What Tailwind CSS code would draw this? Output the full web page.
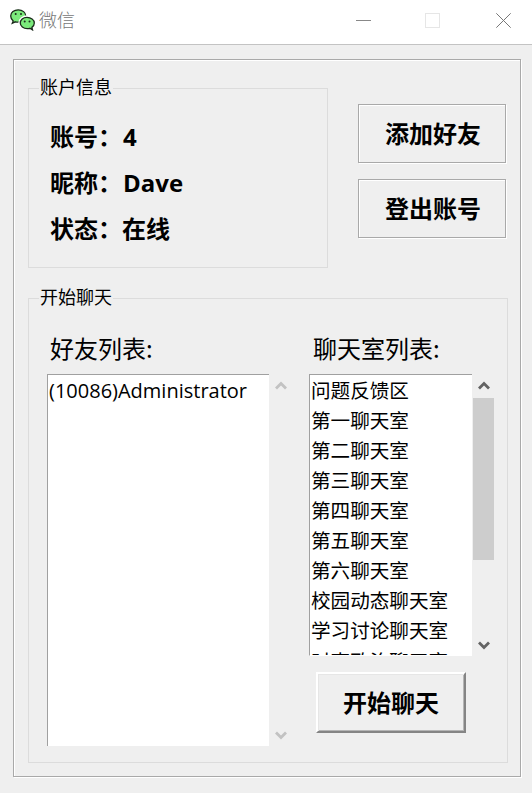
<!DOCTYPE html>
<html lang="zh-CN">
<head>
<meta charset="utf-8">
<title>微信</title>
<script src="https://cdn.jsdelivr.net/npm/@tailwindcss/browser@4"></script>
</head>
<body class="w-[532px] h-[793px] overflow-hidden bg-[#efefef] text-black font-['Noto_Sans_CJK_SC',sans-serif] flex flex-col">
<header class="h-[45px] shrink-0 bg-white border-b border-[#c3c3c3] flex items-center pl-[10px] pr-[21px] pb-[4px]">
  <svg class="w-[25px] h-[22px]" viewBox="0 0 25 22" fill="#7bea7b" stroke="#1c2b1c" stroke-width="1.3">
    <path d="M8.3 .8C4 .8 .7 3.5 .7 7c0 2.200 1 3.700 2.500 4.900L2.300 14.300l3-1.500c1 .3 2 .4 3 .4 4.200 0 7.500-2.800 7.500-6.200S12.500.8 8.300.8z"/>
    <path d="M17.300 7.300c-4.600 0-8 2.900-8 6.700s3.400 6.500 8 6.500" stroke="#fff" stroke-width="2" fill="none"/>
    <path d="M17 8.300c-3.900 0-6.700 2.500-6.700 5.700s3.100 5.700 7 5.700c.9 0 1.800-.1 2.600-.4l2.600 1.600-.6-2.500c1.500-1 2.400-2.600 2.400-4.400 0-3.200-3.400-5.700-7.300-5.700z"/>
    <g fill="#1c2b1c" stroke="none"><circle cx="5.700" cy="5" r="1"/><circle cx="11" cy="5" r="1"/><circle cx="14.700" cy="12.500" r="1"/><circle cx="19.500" cy="12.500" r="1"/></g>
  </svg>
  <h1 class="ml-[4px] -mt-[2px] text-[18px] leading-[24px] font-light text-[#777]">微信</h1>
  <div class="ml-auto flex items-center">
    <div class="w-[15px] h-px bg-[#888] mr-[54px]"></div>
    <div class="w-[15px] h-[15px] border border-[#e6e6e6] mr-[56px]"></div>
    <svg class="w-[15px] h-[15px]" viewBox="0 0 15 15" stroke="#777" stroke-width="1"><path d="M.3.3l14.400 14.400M14.700.3.3 14.700"/></svg>
  </div>
</header>
<main class="mt-[14px] ml-[13px] w-[508px] h-[718px] shrink-0 border border-[#a9a9a9] shadow-[inset_1px_1px_0_#fff,1px_1px_0_#fff] pl-[14px] pt-[15px] flex flex-col">
  <div class="flex h-[210px]">
    <fieldset class="w-[300px] h-[193px] shrink-0 border border-[#dcdcdc] pl-[10px]">
      <legend class="h-[26px] px-px text-[18px] leading-[22px]">账户信息</legend>
      <div class="pl-[11px] pt-[12px] text-[24px] leading-[45px] font-bold">
        <p>账号：<span class="font-['Open_Sans'] ml-px">4</span></p>
        <p>昵称：<span class="font-['Open_Sans'] ml-px">Dave</span></p>
        <p>状态：在线</p>
      </div>
    </fieldset>
    <div class="ml-[30px] pt-[29px] flex flex-col gap-[16px]">
      <button class="w-[148px] h-[59px] border border-[#a9a9a9] shadow-[inset_1px_1px_0_#fff,1px_1px_0_#fff] text-[24px] font-bold pl-[2px] pb-px">添加好友</button>
      <button class="w-[148px] h-[59px] border border-[#a9a9a9] shadow-[inset_1px_1px_0_#fff,1px_1px_0_#fff] text-[24px] font-bold pl-[2px] pb-px">登出账号</button>
    </div>
  </div>
  <fieldset class="w-[480px] h-[478px] shrink-0 border border-[#dcdcdc] pl-[10px]">
    <legend class="h-[26px] px-px text-[18px] leading-[22px]">开始聊天</legend>
    <div class="flex pl-[8px] pt-[17px]">
      <section class="w-[262px] shrink-0">
        <h2 class="pl-[3px] h-[46px] text-[24px] leading-[40px]">好友列表:</h2>
        <div class="flex h-[372px]">
          <ul class="w-[222px] h-full bg-white border-l border-t border-[#a0a0a0] pl-px text-[20px] leading-[30px]">
            <li class="font-['Open_Sans'] pt-px">(10086)Administrator</li>
          </ul>
          <div class="w-[24px] pt-[7px] pb-[6px] flex flex-col justify-between items-center">
            <svg class="w-[12px] h-[10px]" viewBox="0 0 12 10" fill="none" stroke="#c2c2c2" stroke-width="2.800"><path d="M1 7.500l5-5 5 5"/></svg>
            <svg class="w-[12px] h-[10px]" viewBox="0 0 12 10" fill="none" stroke="#c2c2c2" stroke-width="2.800"><path d="M1 2.500l5 5 5-5"/></svg>
          </div>
        </div>
      </section>
      <section>
        <h2 class="pl-[4px] h-[46px] text-[24px] leading-[40px]">聊天室列表:</h2>
        <div class="flex h-[282px]">
          <ul class="w-[163px] h-full overflow-hidden bg-white border-l border-t border-[#a0a0a0] border-b border-b-white pl-px text-[19.600px] leading-[30px] whitespace-nowrap">
            <li>问题反馈区</li>
            <li>第一聊天室</li>
            <li>第二聊天室</li>
            <li>第三聊天室</li>
            <li>第四聊天室</li>
            <li>第五聊天室</li>
            <li>第六聊天室</li>
            <li>校园动态聊天室</li>
            <li>学习讨论聊天室</li>
            <li class="pt-px">时事政治聊天室</li>
          </ul>
          <div class="w-[23px] pt-[7px] pb-[6px] flex flex-col items-center">
            <svg class="w-[12px] h-[10px]" viewBox="0 0 12 10" fill="none" stroke="#636363" stroke-width="2.800"><path d="M1 7.500l5-5 5 5"/></svg>
            <div class="w-[21px] h-[162px] mt-[7px] bg-[#cdcdcd]"></div>
            <svg class="w-[12px] h-[10px] mt-auto" viewBox="0 0 12 10" fill="none" stroke="#636363" stroke-width="2.800"><path d="M1 2.500l5 5 5-5"/></svg>
          </div>
        </div>
        <button class="mt-[16px] ml-[7px] w-[150px] h-[61px] border-2 border-t-white border-l-white border-r-[#858585] border-b-[#858585] shadow-[inset_1px_1px_0_#e6e6e6,inset_-1px_-1px_0_#b5b5b5] text-[24px] font-bold pb-[2px]">开始聊天</button>
      </section>
    </div>
  </fieldset>
</main>
</body>
</html>
